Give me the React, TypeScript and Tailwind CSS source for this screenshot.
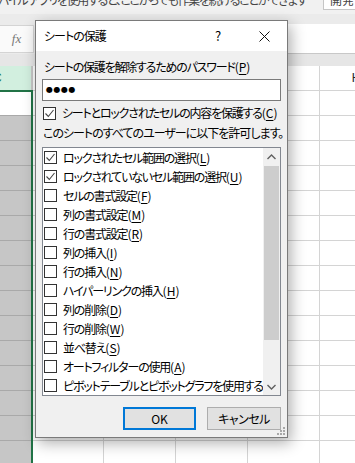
import type { ReactNode } from 'react';

type Perm = { label: string; key: string; checked?: boolean };

const perms: Perm[] = [
  { label: 'ロックされたセル範囲の選択', key: 'L', checked: true },
  { label: 'ロックされていないセル範囲の選択', key: 'U', checked: true },
  { label: 'セルの書式設定', key: 'F' },
  { label: '列の書式設定', key: 'M' },
  { label: '行の書式設定', key: 'R' },
  { label: '列の挿入', key: 'I' },
  { label: '行の挿入', key: 'N' },
  { label: 'ハイパーリンクの挿入', key: 'H' },
  { label: '列の削除', key: 'D' },
  { label: '行の削除', key: 'W' },
  { label: '並べ替え', key: 'S' },
  { label: 'オートフィルターの使用', key: 'A' },
  { label: 'ピボットテーブルとピボットグラフを使用する', key: '' },
];

function CheckBox ({ checked }: { checked?: boolean }) {
  return (
    <div className="w-[13px] h-[13px] shrink-0 border border-[#333] bg-white flex items-center justify-center">
      {checked && (
        <svg width="11" height="11" viewBox="0 0 11 11">
          <path d="M 1.5 5.5 L 4.3 8.5 L 9.5 2" fill="none" stroke="#444" strokeWidth="1.1" />
        </svg>
      )}
    </div>
  );
}

// japanese text squeezed a little, the (X) mnemonic at normal spacing
function Label ({ text, k }: { text: string; k: string }): ReactNode {
  return (
    <span>
      <span className="tracking-[-1.2px]">{text}</span>
      {k && (
        <span className="tracking-normal">
          (<span className="underline underline-offset-[2px]">{k}</span>)
        </span>
      )}
    </span>
  );
}

// one spreadsheet row: C (selected), D..H
function SheetRow ({ first }: { first?: boolean }) {
  return (
    <div className="flex h-[25px] shrink-0">
      <div
        className={
          first
            ? 'w-[31px] shrink-0 bg-white border-t-2 border-[#217346]'
            : 'w-[31px] shrink-0 bg-[#c6c6c6] border-t border-[#a9a9a9]'
        }
      />
      <div className="w-[2px] shrink-0 bg-[#217346]" />
      <div className="w-[71px] shrink-0 border-t border-r border-[#d4d4d4]" />
      <div className="w-[72px] shrink-0 border-t border-r border-[#d4d4d4]" />
      <div className="w-[72px] shrink-0 border-t border-r border-[#d4d4d4]" />
      <div className="w-[72px] shrink-0 border-t border-r border-[#d4d4d4]" />
      <div className="w-[72px] shrink-0 border-t border-r border-[#d4d4d4]" />
    </div>
  );
}

export default function App () {
  return (
    <div className="relative w-[355px] h-[463px] overflow-hidden bg-white font-['Noto_Sans_CJK_JP',sans-serif] [font-feature-settings:'palt'] text-black">
      {/* message bar */}
      <div className="flex h-[14px] bg-[#f1f1f1] overflow-hidden">
        <div className="w-[323px] shrink-0 overflow-hidden">
          <p className="-mt-[8px] -ml-[12px] text-[12px] leading-[16px] tracking-[-1.3px] text-[#444] whitespace-nowrap">
            モバイル アプリを使用すると、ここからでも作業を続けることができます
          </p>
        </div>
        <div className="w-[50px] shrink-0 h-[10px] bg-white border border-t-0 border-[#c6c6c6] overflow-hidden">
          <p className="-mt-[8px] pl-[6px] text-[12px] leading-[16px] text-[#444] whitespace-nowrap">開発</p>
        </div>
      </div>
      <div className="h-[10px] bg-[#ebebeb]" />

      {/* formula bar */}
      <div className="flex h-[30px] bg-[#ebebeb]">
        <div className="w-[34px] shrink-0 h-[28px] mt-[1px] bg-[#fafafa] border border-l-0 border-[#d4d4d4] flex items-center justify-center">
          <span className="font-['Liberation_Serif',serif] italic text-[13px] text-[#777]">fx</span>
        </div>
        <div className="flex-1 ml-[2px] bg-white border-b border-[#c8c8c8]" />
      </div>
      <div className="h-[12px] bg-[#e6e6e6]" />

      {/* column headers */}
      <div className="flex h-[24px] bg-white">
        <div className="w-[31px] shrink-0 bg-[#d2efdf] flex items-center overflow-hidden">
          <span className="-ml-[7px] text-[12px] text-[#217346] font-['Liberation_Sans',sans-serif]">C</span>
        </div>
        <div className="w-[2px] shrink-0 bg-[#c8c8c8]" />
        <div className="w-[71px] shrink-0 border-r border-[#d4d4d4]" />
        <div className="w-[72px] shrink-0 border-r border-[#d4d4d4]" />
        <div className="w-[72px] shrink-0 border-r border-[#d4d4d4]" />
        <div className="w-[72px] shrink-0 border-r border-[#d4d4d4]" />
        <div className="w-[72px] shrink-0 flex items-center justify-center">
          <span className="text-[12px] text-[#222] font-['Liberation_Sans',sans-serif]">H</span>
        </div>
      </div>

      {/* grid */}
      <div className="flex flex-col">
        {Array.from({ length: 15 }).map((_, i) => (
          <SheetRow key={i} first={i === 0} />
        ))}
      </div>

      {/* dialog */}
      <div className="absolute left-[35px] top-[20px] w-[253px] h-[418px] border border-[#7a7a7a] bg-[#f0f0f0] shadow-[3px_5px_14px_rgba(0,0,0,0.32)] flex flex-col text-[12px] leading-[16px] whitespace-nowrap">
        <div className="h-[30px] shrink-0 bg-white flex items-center">
          <span className="pl-[8px] flex-1 tracking-[-1px]">シートの保護</span>
          <div className="w-[46px] h-full flex items-center justify-center text-[13px]">?</div>
          <div className="w-[46px] h-full flex items-center justify-center">
            <svg width="11" height="11" viewBox="0 0 11 11">
              <path d="M 0.5 0.5 L 10.5 10.5 M 10.5 0.5 L 0.5 10.5" stroke="#111" strokeWidth="1" />
            </svg>
          </div>
        </div>

        <p className="mt-[8px] pl-[8px]">
          <Label text="シートの保護を解除するためのパスワード" k="P" />
        </p>
        <div className="mt-[4px] mx-[6px] h-[22px] shrink-0 bg-white border border-[#7a7a7a] flex items-center pl-[3px]">
          <span className="font-['DejaVu_Sans',sans-serif] text-[8px] tracking-[0.5px]">●●●●</span>
        </div>

        <div className="mt-[4px] h-[16px] shrink-0 pl-[7px] flex items-center gap-[6px]">
          <CheckBox checked />
          <Label text="シートとロックされたセルの内容を保護する" k="C" />
        </div>

        <p className="mt-[4px] pl-[7px] tracking-[-1px]">このシートのすべてのユーザーに以下を許可します。</p>

        <div className="mt-[6px] mx-[6px] h-[249px] shrink-0 bg-white border border-[#828790] flex overflow-hidden">
          <div className="flex-1 min-w-0 flex flex-col overflow-hidden">
            {perms.map((p) => (
              <div key={p.label} className="h-[19px] shrink-0 flex items-center gap-[6px] pl-[1px]">
                <CheckBox checked={p.checked} />
                <Label text={p.label} k={p.key} />
              </div>
            ))}
          </div>
          {/* scrollbar */}
          <div className="w-[17px] shrink-0 bg-[#f0f0f0] flex flex-col">
            <div className="h-[17px] flex items-center justify-center">
              <svg width="9" height="6" viewBox="0 0 9 6">
                <path d="M 0.5 5 L 4.5 1 L 8.5 5" fill="none" stroke="#606060" strokeWidth="1.4" />
              </svg>
            </div>
            <div className="flex-1 px-[1px]">
              <div className="h-[174px] mt-[1px] bg-[#cdcdcd]" />
            </div>
            <div className="h-[17px] flex items-center justify-center">
              <svg width="9" height="6" viewBox="0 0 9 6">
                <path d="M 0.5 1 L 4.5 5 L 8.5 1" fill="none" stroke="#606060" strokeWidth="1.4" />
              </svg>
            </div>
          </div>
        </div>

        <div className="mt-[11px] mr-[6px] flex justify-end gap-[11px]">
          <button type="button" className="w-[73px] h-[23px] bg-[#e1e1e1] border-2 border-[#0078d7] text-[12px]">
            OK
          </button>
          <button type="button" className="w-[74px] h-[23px] bg-[#e1e1e1] border border-[#adadad] text-[12px] tracking-[-0.5px]">
            キャンセル
          </button>
        </div>

        {/* size grip */}
        <svg className="absolute right-[1px] bottom-[1px]" width="9" height="9" viewBox="0 0 9 9">
          <rect x="6" y="0" width="2" height="2" fill="#a8a8a8" />
          <rect x="3" y="3" width="2" height="2" fill="#a8a8a8" />
          <rect x="6" y="3" width="2" height="2" fill="#a8a8a8" />
          <rect x="0" y="6" width="2" height="2" fill="#a8a8a8" />
          <rect x="3" y="6" width="2" height="2" fill="#a8a8a8" />
          <rect x="6" y="6" width="2" height="2" fill="#a8a8a8" />
        </svg>
      </div>
    </div>
  );
}
